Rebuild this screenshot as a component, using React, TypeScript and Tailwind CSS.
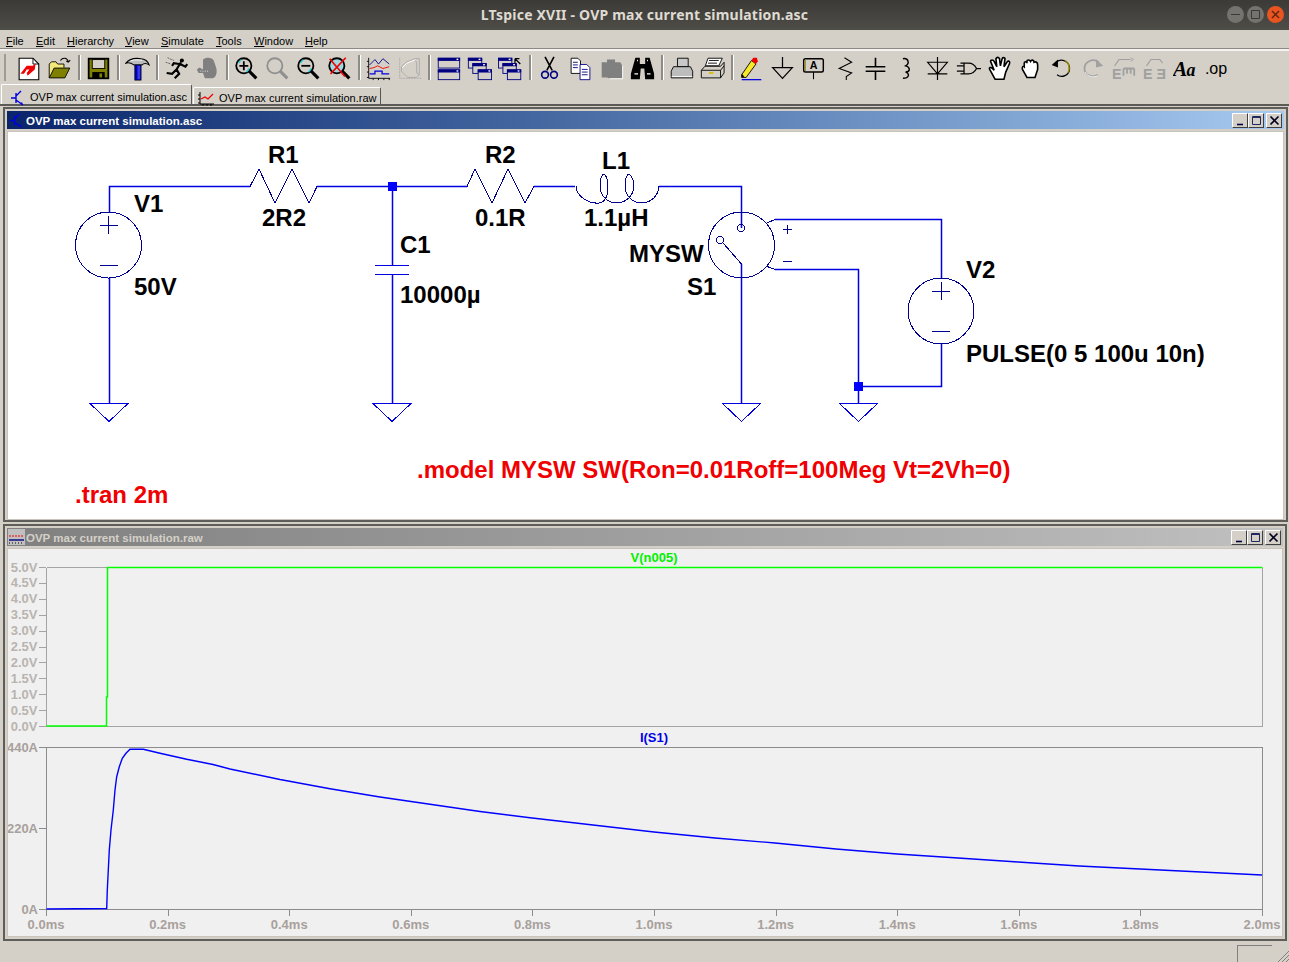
import type { ReactNode } from 'react'

const WIRE = '#0000e0'
const SYM = '#000090'

const menus = [
  { label: 'File', w: 'w-[30px]' },
  { label: 'Edit', w: 'w-[31px]' },
  { label: 'Hierarchy', w: 'w-[58px]' },
  { label: 'View', w: 'w-[36px]' },
  { label: 'Simulate', w: 'w-[55px]' },
  { label: 'Tools', w: 'w-[38px]' },
  { label: 'Window', w: 'w-[51px]' },
  { label: 'Help', w: 'w-[30px]' },
]

function Ico({ children }: { children: ReactNode }) {
  return (
    <svg width="25" height="25" viewBox="0 0 28 28" fill="none" aria-hidden="true">
      {children}
    </svg>
  )
}

function Lens({ glass = '#d4d0c8', ring = '#000', children }: { glass?: string; ring?: string; children?: ReactNode }) {
  return (
    <>
      <circle cx="11" cy="11" r="8.5" fill={glass} stroke={ring} strokeWidth="2" />
      <path d="M17 17 L25 25" stroke={ring} strokeWidth="3.5" />
      {children}
    </>
  )
}

function MiniWin({ x, y, w = 15, h = 11 }: { x: number; y: number; w?: number; h?: number }) {
  return (
    <>
      <rect x={x + 0.5} y={y + 0.5} width={w} height={h} fill="#d4d0c8" stroke="#000080" />
      <rect x={x} y={y} width={w + 1} height="3.5" fill="#000080" />
      <rect x={x + w - 3} y={y + 1} width="2" height="1.5" fill="#fff" />
    </>
  )
}

const icons: ReactNode[][] = [
  [
    <Ico key="new">
      <path d="M3.5 2.5 H19 L25.5 9 V26.5 H3.5 Z" fill="#fff" stroke="#000" strokeWidth="1.2" />
      <path d="M19 2.5 V9 H25.5" stroke="#000" />
      <path d="M5 20 L12 11 H19 L22 8 L21 15 L13 22 L12 19 L15 15 H12 L9 20 Z" fill="#f00000" />
    </Ico>,
    <Ico key="open">
      <path d="M2.5 24.5 V9 L5 6.5 H10 L12 9 H19 V13" fill="#f4e87a" stroke="#000" />
      <path d="M2.5 24.5 L8 13.5 H25.5 L20 24.5 Z" fill="#808000" stroke="#000" />
      <path d="M15 5 C18 1 23 2 24 7 M24 7 L26 4.5 M24 7 L21.5 5.5" stroke="#000" strokeWidth="1.2" />
    </Ico>,
  ],
  [
    <Ico key="save">
      <rect x="3" y="3" width="22" height="22" fill="#808000" stroke="#000" strokeWidth="2" />
      <rect x="7" y="4" width="14" height="10" fill="#d4d0c8" stroke="#000" />
      <rect x="7" y="18" width="14" height="7" fill="#000" />
      <rect x="15" y="19.5" width="3" height="4.5" fill="#808000" />
    </Ico>,
  ],
  [
    <Ico key="hammer">
      <path d="M1 8 C5 3 11 2 18 3 C22 3 26 6 27 10 C24 8 21 8 19 10 H10 C7 8 4 7 1 8 Z" fill="#bcbcbc" stroke="#000" strokeWidth="1.2" />
      <path d="M6 5.5 C10 4 15 4 19 5" stroke="#fff" />
      <rect x="11" y="10" width="7" height="17" fill="#0000c0" stroke="#000" strokeWidth=".8" />
      <rect x="14" y="11" width="3" height="15" fill="#3a3ae0" />
    </Ico>,
  ],
  [
    <Ico key="run">
      <circle cx="20" cy="5" r="2.3" fill="#000" />
      <path d="M19 7 L14 15 L17 20 L12 25 M14 15 L9 20 L3 19 M18 9 L24 12 L26 9 M17 9 L11 8 L9 11" stroke="#000" strokeWidth="2.4" />
      <path d="M4 2 L11 5 M2 7 L8 9" stroke="#555" strokeDasharray="2 1" />
    </Ico>,
    <Ico key="halt">
      <path d="M9 4 C12 1 19 1 21 5 L24 14 C25 20 23 24 20 25 H11 L9 19 H4 L2 15 L5 13 L9 15 Z" fill="#808080" />
      <path d="M6 17 H15" stroke="#e8e8e8" strokeDasharray="1 1.5" />
    </Ico>,
  ],
  [
    <Ico key="zin">
      <Lens>
        <path d="M6 11 H16 M11 6 V16" stroke="#000" strokeWidth="2" />
        <path d="M5 8 L8 4" stroke="#20d0e0" strokeWidth="1.5" />
        <path d="M17 14 L14 18" stroke="#20d0e0" strokeWidth="1.5" />
      </Lens>
    </Ico>,
    <Ico key="zgrey">
      <Lens ring="#909090" />
    </Ico>,
    <Ico key="zout">
      <Lens>
        <path d="M6 11 H16" stroke="#000" strokeWidth="2" />
        <path d="M5 8 L8 4" stroke="#20d0e0" strokeWidth="1.5" />
        <path d="M17 14 L14 18" stroke="#20d0e0" strokeWidth="1.5" />
      </Lens>
    </Ico>,
    <Ico key="zcancel">
      <Lens glass="#9fd8e0">
        <path d="M3 3 L20 23 M21 2 L4 20" stroke="#f00000" strokeWidth="1.8" />
      </Lens>
    </Ico>,
  ],
  [
    <Ico key="chart">
      <path d="M3 2 V25 H27" stroke="#000" />
      <path d="M1 24 H3 M1 18 H3 M1 12 H3 M1 6 H3 M8 25 V27 M14 25 V27 M20 25 V27 M26 25 V27" stroke="#000" />
      <path d="M4 10 L10 4 L14 9 L19 3 L26 9" stroke="#000080" />
      <path d="M4 14 L9 13 L13 11 L19 14 L26 12" stroke="#f00000" />
      <path d="M4 20 H10 V17 H18 V20 H26" stroke="#0000e0" strokeWidth="1.4" />
    </Ico>,
    <Ico key="chartgrey">
      <path d="M3 2 V25 H27" stroke="#a8a8a8" strokeDasharray="2 1" />
      <path d="M5 12 L10 7 L20 3 H25 V21 L22 24 H12 L5 17 Z M20 3 L22 8 V19 L25 21" stroke="#a8a8a8" />
      <path d="M6 13 L11 8 L21 4" stroke="#fff" />
    </Ico>,
  ],
  [
    <Ico key="tile">
      <MiniWin x={2} y={2} w={24} h={11} />
      <MiniWin x={2} y={15} w={24} h={11} />
    </Ico>,
    <Ico key="cascade">
      <MiniWin x={1} y={2} />
      <MiniWin x={6} y={8} />
      <MiniWin x={12} y={15} />
    </Ico>,
    <Ico key="cascade2">
      <MiniWin x={0} y={2} />
      <MiniWin x={5} y={8} />
      <MiniWin x={10} y={15} />
      <path d="M25 9 L19 3 M19 3 H24 M19 3 V8" stroke="#000" strokeWidth="1.4" />
    </Ico>,
  ],
  [
    <Ico key="cut">
      <path d="M9 1 L17 16 M19 1 L11 16 " stroke="#000" strokeWidth="1.8" />
      <circle cx="9" cy="21" r="3.8" stroke="#000080" strokeWidth="1.8" />
      <circle cx="19" cy="21" r="3.8" stroke="#000080" strokeWidth="1.8" />
    </Ico>,
    <Ico key="copy">
      <path d="M3.5 2.5 H11 L14 5.5 V19.5 H3.5 Z" fill="#fff" stroke="#000" />
      <path d="M13.5 9.5 H21 L24.5 13 V26.5 H13.5 Z" fill="#fff" stroke="#000080" />
      <path d="M5.5 7 H11 M5.5 10 H11 M5.5 13 H11 M15.5 15 H22 M15.5 18 H22 M15.5 21 H22" stroke="#000080" />
    </Ico>,
    <Ico key="paste">
      <path d="M3 7 H9 V4 H18 V7 H24 L26 11 V25 H11 L9 24 H3 Z" fill="#808080" />
      <path d="M12 25.5 H26.5 V11" stroke="#fff" />
    </Ico>,
    <Ico key="bino">
      <path d="M6 2 H11 V9 H17 V2 H22 L27 20 V26 H17 L16 14 H12 L11 26 H1 V20 Z" fill="#000" />
      <path d="M5 20 H9 M19 20 H23 M8 5 H9 M19 5 H20" stroke="#fff" strokeWidth="1.5" />
    </Ico>,
  ],
  [
    <Ico key="preview">
      <path d="M9.5 2.5 H21.5 V12 H9.5 Z" fill="#c8c8c8" stroke="#000" />
      <path d="M5 12 H24 L26.5 17 V24.5 H2.5 V17 Z" fill="#bdbdbd" stroke="#000" />
      <path d="M3 23 H26" stroke="#fff" />
    </Ico>,
    <Ico key="print">
      <path d="M9 2.5 H25 L21 11 H6 Z" fill="#fff" stroke="#000" />
      <path d="M10 5 H21 M9 8 H19" stroke="#000" />
      <path d="M5.5 11.5 H23 L27 7 V19 L23 24.5 H1.5 V16 Z M1.5 16 H23 V24.5 M23 16 L27 11" fill="#d4d0c8" stroke="#000" />
      <path d="M10 19 H15" stroke="#d8c000" strokeWidth="2" />
    </Ico>,
  ],
  [
    <Ico key="label">
      <path d="M3 26.5 H25" stroke="#0000e0" strokeWidth="1.4" />
      <path d="M3 21 L14 5 L19 9 L8 24 L3 24 Z" fill="#f7e928" stroke="#000" />
      <path d="M14 5 L16 2 L20 2 L21 6 L19 9 Z" fill="#f00000" />
      <path d="M3 24 V20 L6 23 Z" fill="#000" />
    </Ico>,
    <Ico key="gnd">
      <path d="M14 1 V13 M3 13 H25 L14 25 Z" stroke="#000" strokeWidth="1.4" />
    </Ico>,
    <Ico key="busA">
      <rect x="3" y="3" width="22" height="15" rx="2" stroke="#000" strokeWidth="1.6" fill="#d4d0c8" />
      <path d="M5 4 V17" stroke="#a09000" />
      <text x="14" y="15" textAnchor="middle" className="text-[12px] font-bold" fill="#000">A</text>
      <path d="M14 18 V26" stroke="#000" strokeWidth="1.2" />
    </Ico>,
    <Ico key="res">
      <path d="M14 2 L22 7 L8 14 L22 19 L16 23 V27" stroke="#000" strokeWidth="1.2" />
    </Ico>,
    <Ico key="cap">
      <path d="M14 2 V12 M3 12 H25 M3 17 H25 M14 17 V27" stroke="#000" strokeWidth="1.8" />
    </Ico>,
    <Ico key="ind">
      <path d="M10 3 C16 2 18 8 13 11 C19 13 18 18 13 18 C18 20 17 25 10 25" stroke="#000" strokeWidth="1.6" />
    </Ico>,
    <Ico key="diode">
      <path d="M14 1 V27 M3 7 H25 L14 20 L3 7 Z M3 20 H25" stroke="#000" strokeWidth="1.3" />
    </Ico>,
    <Ico key="comp">
      <path d="M5 8 H14 C20 8 22 12 23 14 C22 16 20 20 14 20 H5 M9 8 V20 M1 11 H9 M1 17 H9 M23 14 H28" stroke="#000" strokeWidth="1.4" />
    </Ico>,
    <Ico key="move">
      <path d="M9 26 L3 15 C2 13 4 12 6 14 L8 16 L4 6 C4 4 7 4 8 6 L11 12 L10 3 C11 1 13 1 14 3 L15 11 L17 3 C18 1 21 2 20 4 L19 12 L23 6 C25 5 26 7 25 9 L21 18 L19 26 Z" fill="#fff" stroke="#000" strokeWidth="1.8" />
    </Ico>,
    <Ico key="drag">
      <path d="M10 24 L5 15 C4 12 6 11 7 12 V8 C7 6 10 6 10 8 V6 C10 4 13 4 14 6 C15 4 18 4 18 7 C20 6 22 7 22 10 V15 L19 24 Z" fill="#fff" stroke="#000" strokeWidth="1.8" />
    </Ico>,
    <Ico key="undo">
      <path d="M8 7 C14 2 23 6 23 14" stroke="#000" strokeWidth="1.4" />
      <path d="M23 14 C23 22 14 25 9 21" stroke="#000" strokeWidth="1.4" />
      <path d="M3 10 L10 4 L10 13 Z" fill="#000" />
      <path d="M18 5 C23 8 24 15 21 19" stroke="#a09000" strokeWidth="1.4" />
    </Ico>,
    <Ico key="redo">
      <path d="M21 7 C15 2 5 6 5 14 C5 22 15 25 20 21" stroke="#a0a0a0" strokeWidth="2" />
      <path d="M26 11 L18 4 L18 13 Z" fill="#a0a0a0" />
      <path d="M6 18 C8 23 15 25 20 22" stroke="#fff" />
    </Ico>,
    <Ico key="rot">
      <path d="M4 11 L9 4 H22" stroke="#a0a0a0" strokeWidth="1.2" />
      <path d="M22 2 L25 4 L22 6" stroke="#a0a0a0" />
      <text x="1" y="26" className="text-[16px] font-bold" fill="#a0a0a0">E</text>
      <path d="M14 14 H26 M14 14 V22 M18 14 V20 M22 14 V20 M26 14 V22" stroke="#a0a0a0" strokeWidth="2" />
    </Ico>,
    <Ico key="mirror">
      <path d="M5 11 L10 4 H20 L23 8" stroke="#a0a0a0" strokeWidth="1.2" />
      <text x="1" y="26" className="text-[16px] font-bold" fill="#a0a0a0">E</text>
      <text x="27" y="26" textAnchor="start" transform="scale(-1 1) translate(-54 0)" className="text-[16px] font-bold" fill="#a0a0a0">E</text>
    </Ico>,
    <Ico key="text">
      <text x="0" y="22" className="text-[24px] font-bold italic font-['Liberation_Serif']" fill="#000">A</text>
      <text x="15" y="22" className="text-[20px] font-bold italic font-['Liberation_Serif']" fill="#000">a</text>
    </Ico>,
    <Ico key="op">
      <text x="1" y="20" className="text-[18px] font-['Liberation_Sans']" fill="#000">.op</text>
    </Ico>,
  ],
]

function Toolbar() {
  return (
    <div className="flex h-[35px] items-stretch border-t-2 border-t-[#f4f3f0] shadow-[0_-1px_0_#8c8a84]">
      <div className="my-[3px] ml-[4px] mr-[7px] w-[2px] bg-[#a09c94]" />
      {icons.map((group, i) => (
        <div key={i} className="flex items-stretch">
          {group.map((icon, j) => (
            <div key={j} className="flex w-[31px] items-center justify-center pt-[1px]">
              {icon}
            </div>
          ))}
          <div className="flex w-[8px] justify-center">
            <div className={i === icons.length - 1 ? 'ml-[15px] w-[2px] bg-[#8f8c86]' : 'my-[4px] w-[2px] bg-[#8f8c86] shadow-[1px_0_0_#fff]'} />
          </div>
        </div>
      ))}
    </div>
  )
}

function TransistorIcon({ size = 16 }: { size?: number }) {
  return (
    <svg width={size} height={size} viewBox="0 0 16 16" fill="none" aria-hidden="true">
      <path d="M1 8 H6 M6 3 V13 M6 6 L11 1 M6 10 L13 15" stroke="#0000e0" strokeWidth="1.4" />
      <path d="M10 14 L13 15 L12 12 Z" fill="#0000e0" />
    </svg>
  )
}

function Tabs() {
  return (
    <div className="flex h-[22px] items-end border-b-2 border-b-[#5c5a56] pl-[1px] text-[11px] text-black">
      <div className="flex h-[20px] w-[191px] items-center gap-[4px] rounded-t-[2px] border border-b-0 border-t-white border-l-white border-r-[#555] bg-[#d4d0c8] pl-[8px] pt-[6px]">
        <TransistorIcon />
        <span>OVP max current simulation.asc</span>
      </div>
      <div className="ml-[1px] flex h-[17px] w-[188px] items-center gap-[4px] rounded-t-[2px] border border-b-0 border-t-white border-l-white border-r-[#555] bg-[#d4d0c8] pl-[4px] pt-[5px]">
        <svg width="17" height="16" viewBox="0 0 17 16" fill="none" aria-hidden="true">
          <path d="M2 1 V13 H16 M0 12 H2 M0 8 H2 M0 4 H2 M5 13 V15 M9 13 V15 M13 13 V15" stroke="#000" />
          <path d="M3 8 L7 6 L10 8 L15 3" stroke="#f00000" strokeWidth="1.3" />
        </svg>
        <span>OVP max current simulation.raw</span>
      </div>
    </div>
  )
}

function WinButton({ kind }: { kind: 'min' | 'max' | 'close' }) {
  return (
    <div className="flex h-[15px] w-[16px] items-center justify-center border border-t-white border-l-white border-r-[#404040] border-b-[#404040] bg-[#d4d0c8]">
      <svg width="11" height="11" viewBox="0 0 11 11" fill="none" aria-hidden="true">
        {kind === 'min' && <path d="M2 9.5 H8" stroke="#000040" strokeWidth="1.6" />}
        {kind === 'max' && <path d="M1.5 1.5 H9.5 V9.5 H1.5 Z M1.5 2.5 H9.5" stroke="#202860" />}
        {kind === 'close' && <path d="M1.5 1.5 L9.5 9.5 M9.5 1.5 L1.5 9.5" stroke="#000020" strokeWidth="1.7" />}
      </svg>
    </div>
  )
}

function MdiWindow({
  title,
  active,
  icon,
  frameClass,
  children,
}: {
  title: string
  active: boolean
  icon: ReactNode
  frameClass: string
  children: ReactNode
}) {
  return (
    <div className={`flex flex-col border-2 border-[#5f5d59] bg-[#d4d0c8] px-[2px] pt-[2px] ${frameClass}`}>
      <div
        className={
          active
            ? 'flex h-[18px] shrink-0 items-center bg-gradient-to-r from-[#0a246a] to-[#a6caf0] text-white'
            : 'flex h-[18px] shrink-0 items-center bg-gradient-to-r from-[#808080] to-[#c0c0c0] text-[#d4d0c8]'
        }
      >
        <div className="flex w-[18px] justify-center">{icon}</div>
        <span className="pl-[1px] pt-[4px] text-[11.5px] font-bold leading-none">{title}</span>
        <div className="ml-auto mr-[2px] flex items-center">
          <WinButton kind="min" />
          <WinButton kind="max" />
          <div className="w-[2px]" />
          <WinButton kind="close" />
        </div>
      </div>
      <div className="mt-[2px] min-h-0 flex-1 border border-[#c8c4bc]">{children}</div>
    </div>
  )
}

function Ground({ x }: { x: number }) {
  return <path d={`M${x - 19} 403.5 H${x + 19} L${x} 421.5 Z`} stroke={WIRE} fill="none" />
}

function Source({ cx, cy }: { cx: number; cy: number }) {
  return (
    <>
      <circle cx={cx} cy={cy} r="33" stroke={SYM} fill="none" />
      <path d={`M${cx - 9} ${cy - 20} H${cx + 9} M${cx} ${cy - 29} V${cy - 11} M${cx - 9} ${cy + 20} H${cx + 9}`} stroke={SYM} />
    </>
  )
}

const labels = [
  { t: 'R1', x: 268, y: 163 },
  { t: 'V1', x: 134, y: 212 },
  { t: '2R2', x: 262, y: 226 },
  { t: '50V', x: 134, y: 295 },
  { t: 'C1', x: 400, y: 253 },
  { t: '10000µ', x: 400, y: 303 },
  { t: 'R2', x: 485, y: 163 },
  { t: '0.1R', x: 475, y: 226 },
  { t: 'L1', x: 602, y: 169 },
  { t: '1.1µH', x: 584, y: 226 },
  { t: 'MYSW', x: 629, y: 262 },
  { t: 'S1', x: 687, y: 295 },
  { t: 'V2', x: 966, y: 278 },
  { t: 'PULSE(0 5 100u 10n)', x: 966, y: 362 },
]

function Schematic() {
  return (
    <svg className="block h-full w-full bg-white" viewBox="8 132 1275 387" preserveAspectRatio="none">
      <g stroke={WIRE} strokeWidth="1.5" fill="none">
        <path d="M109.5 212 V186.5 H250 M317 186.5 H467 M534 186.5 H575 M659 186.5 H741.5 V228" />
        <path d="M109.5 278 V404 M392.5 186 V265 M392.5 274 V404 M741.5 264 V404" />
        <path d="M775 219.5 H941.5 V278 M775 269.5 H858.5 V404 M941.5 344 V386.5 H858.5" />
      </g>
      <g shapeRendering="crispEdges">
        <g stroke={SYM} fill="none">
          <path d="M250 186.5 L259 169 L275 203 L292 169 L309 203 L317 186.5" />
          <path d="M467 186.5 L475 169 L492 203 L508 169 L525 203 L534 186.5" />
          <path d="M375 265.5 H409 M375 274.5 H409" stroke={WIRE} />
          <path d="M576 186 C576 197 590 204 599 203 C606 202 608 194 608 186 C608 180 606 175 604 174 C601 175 600 180 600 186 C600 196 608 203 617 203 C626 203 634 195 634 186 C634 180 631 175 629 174 C626 175 625 180 625 186 C625 196 633 203 642 203 C651 203 659 195 659 186" />
          <circle cx="741.5" cy="245" r="33" />
          <circle cx="741" cy="228" r="3.5" />
          <circle cx="720" cy="240" r="3.5" />
          <path d="M723 243 L741.5 264 M766 223.5 L775 219.5 M766 266 L775 269.5" />
          <path d="M783 229 H792 M787.5 224.5 V233.5 M783 261.5 H792" />
        </g>
        <Source cx={108.5} cy={245} />
        <Source cx={941} cy={311} />
        <Ground x={109} />
        <Ground x={392} />
        <Ground x={741.5} />
        <Ground x={858.5} />
        <rect x="388" y="182" width="9" height="9" fill="#0000ff" />
        <rect x="854" y="382" width="9" height="9" fill="#0000ff" />
      </g>
      {labels.map((l) => (
        <text key={l.t} x={l.x} y={l.y} fill="#000" className="text-[24px] font-bold">
          {l.t}
        </text>
      ))}
      <text x="417" y="478" fill="#f00000" className="text-[24px] font-bold">
        .model MYSW SW(Ron=0.01Roff=100Meg Vt=2Vh=0)
      </text>
      <text x="75" y="503" fill="#f00000" className="text-[24px] font-bold">
        .tran 2m
      </text>
    </svg>
  )
}

const voltTicks = Array.from({ length: 11 }, (_, i) => ({
  label: `${(i * 0.5).toFixed(1)}V`,
  y: 726.5 - i * 15.9,
}))

const timeTicks = Array.from({ length: 11 }, (_, i) => ({
  label: `${(i * 0.2).toFixed(1)}ms`,
  x: 46.5 + i * 121.6,
}))

const current = [
  [46.5, 909], [106.7, 908.5], [107.3, 890], [108.3, 870], [109.3, 850], [111, 830], [113.3, 810],
  [115, 790], [116.7, 776.7], [119.3, 766.7], [122.3, 758.3], [126, 753.3], [130, 749.3], [143.3, 749.3],
  [160, 753.3], [186.7, 759.3], [213, 764.5], [230, 769], [280, 779.5], [330, 788.7], [380, 797],
  [430, 804.3], [480, 811.5], [530, 817.7], [593, 825], [654, 832], [715, 838], [775, 843], [836, 849],
  [897, 854], [958, 858], [1018, 862], [1079, 866], [1140, 869], [1201, 872], [1262, 875],
]

function Plot() {
  return (
    <svg className="block h-full w-full bg-[#f0f0f0]" viewBox="8 549 1274 387" preserveAspectRatio="none">
      <g className="text-[13px] font-bold">
        <path d="M46.5 567.5 V726.5 H1262.5 V567.5 M46.5 567.5 H107" stroke="#a4a4a4" fill="none" shapeRendering="crispEdges" />
        {voltTicks.map((t) => (
          <g key={t.label}>
            <path d={`M39 ${t.y} H46`} stroke="#a4a4a4" shapeRendering="crispEdges" />
            <text x="37.5" y={t.y + 4} textAnchor="end" fill="#b8b4b0">
              {t.label}
            </text>
          </g>
        ))}
        <path d="M46.5 726 H106.5 V697 H107.5 V567.5 H1262.5" stroke="#00ff00" strokeWidth="1.5" fill="none" />
        <text x="654" y="562" textAnchor="middle" fill="#00f000">
          V(n005)
        </text>

        <path d="M46.5 747.5 H1262.5 V909.5 H46.5 Z" stroke="#8c8c8c" fill="none" shapeRendering="crispEdges" />
        <path d="M39 747.5 H46 M39 828.5 H46 M39 909.5 H46" stroke="#8c8c8c" shapeRendering="crispEdges" />
        <text x="38" y="752" textAnchor="end" fill="#a8a09c">440A</text>
        <text x="38" y="833" textAnchor="end" fill="#a8a09c">220A</text>
        <text x="38" y="914" textAnchor="end" fill="#a8a09c">0A</text>
        <text x="654" y="742" textAnchor="middle" fill="#0000e6">
          I(S1)
        </text>
        {timeTicks.map((t) => (
          <g key={t.label}>
            <path d={`M${t.x} 909 V916`} stroke="#8c8c8c" shapeRendering="crispEdges" />
            <text x={t.x - 0.5} y="929" textAnchor="middle" fill="#a8a09c">
              {t.label}
            </text>
          </g>
        ))}
        <polyline points={current.map((p) => p.join(',')).join(' ')} stroke="#0000ff" strokeWidth="1.4" fill="none" />
      </g>
    </svg>
  )
}

export default function App() {
  return (
    <div className="flex h-[962px] w-[1289px] flex-col overflow-hidden bg-[#d4d0c8] font-['Liberation_Sans',sans-serif]">
      <div className="relative flex h-[30px] shrink-0 items-center justify-center bg-gradient-to-b from-[#3b3a36] to-[#4f4d48] pb-[1px]">
        <span className="text-[14px] font-bold tracking-[0.2px] text-[#dfdbd2] font-['Noto_Sans',sans-serif]">
          LTspice XVII - OVP max current simulation.asc
        </span>
        <div className="absolute right-[5px] top-[6px] flex gap-[3px]">
          <div className="flex h-[17px] w-[17px] items-center justify-center rounded-full bg-[#75736d] text-[#3a3935]">
            <svg width="9" height="9" viewBox="0 0 9 9" fill="none"><path d="M0 4.5 H9" stroke="currentColor" /></svg>
          </div>
          <div className="flex h-[17px] w-[17px] items-center justify-center rounded-full bg-[#75736d] text-[#3a3935]">
            <svg width="9" height="9" viewBox="0 0 9 9" fill="none"><path d="M.5 .5 H8.5 V8.5 H.5 Z" stroke="currentColor" /></svg>
          </div>
          <div className="flex h-[17px] w-[17px] items-center justify-center rounded-full bg-[#e95420] text-[#5a2410]">
            <svg width="9" height="9" viewBox="0 0 9 9" fill="none"><path d="M1 1 L8 8 M8 1 L1 8" stroke="currentColor" strokeWidth="1.4" /></svg>
          </div>
        </div>
      </div>

      <div className="flex h-[19px] shrink-0 items-end pl-[6px] text-[11px] leading-[16px] text-black">
        {menus.map((m) => (
          <div key={m.label} className={m.w}>
            <span className="underline">{m.label[0]}</span>
            {m.label.slice(1)}
          </div>
        ))}
      </div>

      <Toolbar />
      <Tabs />

      <div className="flex min-h-0 flex-1 flex-col gap-[2px] pl-[3px] pr-[1px] pt-[1px]">
        <MdiWindow title="OVP max current simulation.asc" active frameClass="h-[415px]" icon={<TransistorIcon size={15} />}>
          <Schematic />
        </MdiWindow>
        <MdiWindow
          title="OVP max current simulation.raw"
          active={false}
          frameClass="mr-[1px] h-[417px] pb-[2px]"
          icon={
            <svg width="17" height="16" viewBox="0 0 17 16" fill="none" aria-hidden="true">
              <rect width="17" height="16" fill="#c0c0c0" />
              <path d="M1 7 H16" stroke="#f00000" strokeDasharray="2 1" />
              <path d="M1 11 H16" stroke="#000080" strokeWidth="1.4" />
              <path d="M1 14 H16" stroke="#000" strokeDasharray="1 2" />
            </svg>
          }
        >
          <Plot />
        </MdiWindow>
      </div>

      <div className="relative flex h-[17px] shrink-0 justify-end pr-[17px]">
        <div className="h-full w-[35px] border-l border-t border-[#808080]" />
        <svg className="absolute bottom-0 right-0" width="12" height="12" viewBox="0 0 12 12" fill="none" aria-hidden="true">
          <path d="M12 1 L1 12 M12 5 L5 12 M12 9 L9 12" stroke="#808080" />
        </svg>
      </div>
    </div>
  )
}
